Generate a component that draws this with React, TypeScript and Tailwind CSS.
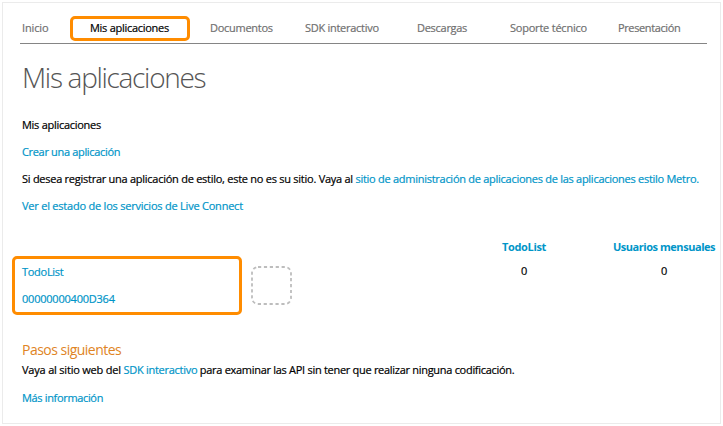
const link = "text-[#0095c8]";

export default function App() {
  return (
    <div className="h-[426px] w-[723px] overflow-hidden bg-white pl-[2px] pt-[2px] font-['Open_Sans','Noto_Sans',sans-serif] text-[11px] leading-[15px] tracking-[-0.28px] text-black [-webkit-text-stroke:0.2px]">
      <div className="flex h-[422px] w-[719px] flex-col whitespace-nowrap border border-[#ebebeb] bg-white">
        <nav className="ml-[17px] flex h-[41px] w-[687px] shrink-0 border-b border-[#858585] pt-[13px] text-[#707070]">
          <a className="ml-[2px] mt-[4px] w-[48px] tracking-[-0.15px]">Inicio</a>
          <a className="h-[25px] w-[120px] rounded-[5px] border-[3px] border-[#ff8c00] pl-[17px] pt-px text-black">Mis aplicaciones</a>
          <a className="ml-[20px] mt-[4px] w-[95px]">Documentos</a>
          <a className="mt-[4px] w-[112px]">SDK interactivo</a>
          <a className="mt-[4px] w-[93px]">Descargas</a>
          <a className="mt-[4px] w-[108px] tracking-[-0.22px]">Soporte técnico</a>
          <a className="mt-[4px] tracking-[-0.38px]">Presentación</a>
        </nav>
        <main className="flex flex-col items-start pl-[19px]">
          <h1 className="mt-[13px] h-[40px] text-[28px] font-light leading-[40px] tracking-[-1.3px] text-[#555] [-webkit-text-stroke:0]">Mis aplicaciones</h1>
          <p className="mt-[20px]">Mis aplicaciones</p>
          <a className={`mt-[12px] tracking-[-0.33px] ${link}`}>Crear una aplicación</a>
          <p className="mt-[12px]"><span className="tracking-[-0.26px]">Si desea registrar una aplicación de estilo, este no es su sitio. Vaya al </span><a className={`tracking-[-0.27px] ${link}`}>sitio de administración de aplicaciones de las aplicaciones estilo Metro.</a></p>
          <a className={`mt-[12px] tracking-[-0.22px] ${link}`}>Ver el estado de los servicios de Live Connect</a>
          <section className="mt-[26px] flex h-[77px]">
            <div className={`-ml-[10px] mt-[17px] flex h-[59px] w-[230px] flex-col items-start gap-[12px] rounded-[5px] border-[3px] border-[#ff8c00] pl-[7px] pt-[5px] ${link}`}>
              <a>TodoList</a>
              <a className="tracking-[-0.22px]">00000000400D364</a>
            </div>
            <svg className="ml-[9px] mt-[27px] h-[39px] w-[41px]" viewBox="0 0 41 39" fill="none">
              <rect x="1" y="1" width="39" height="37" rx="6" stroke="#bdbdbd" strokeWidth="1.8" strokeDasharray="3.2 2.7" />
            </svg>
            <div className="ml-[192px] flex w-[80px] flex-col items-center gap-[9px]">
              <a className={`font-bold tracking-[-0.35px] [-webkit-text-stroke:0] ${link}`}>TodoList</a>
              <span>0</span>
            </div>
            <div className="ml-[40px] flex w-[120px] flex-col items-center gap-[9px]">
              <a className={`font-bold tracking-[-0.45px] [-webkit-text-stroke:0] ${link}`}>Usuarios mensuales</a>
              <span>0</span>
            </div>
          </section>
          <h2 className="mt-[24px] h-[20px] text-[14px] font-normal leading-[20px] tracking-[-0.52px] text-[#e08424] [-webkit-text-stroke:0]">Pasos siguientes</h2>
          <p className="mt-[2px]"><span className="tracking-[-0.2px]">Vaya al sitio web del </span><a className={link}>SDK interactivo</a><span className="tracking-[-0.29px]"> para examinar las API sin tener que realizar ninguna codificación.</span></p>
          <a className={`mt-[13px] tracking-[-0.34px] ${link}`}>Más información</a>
        </main>
      </div>
    </div>
  );
}
